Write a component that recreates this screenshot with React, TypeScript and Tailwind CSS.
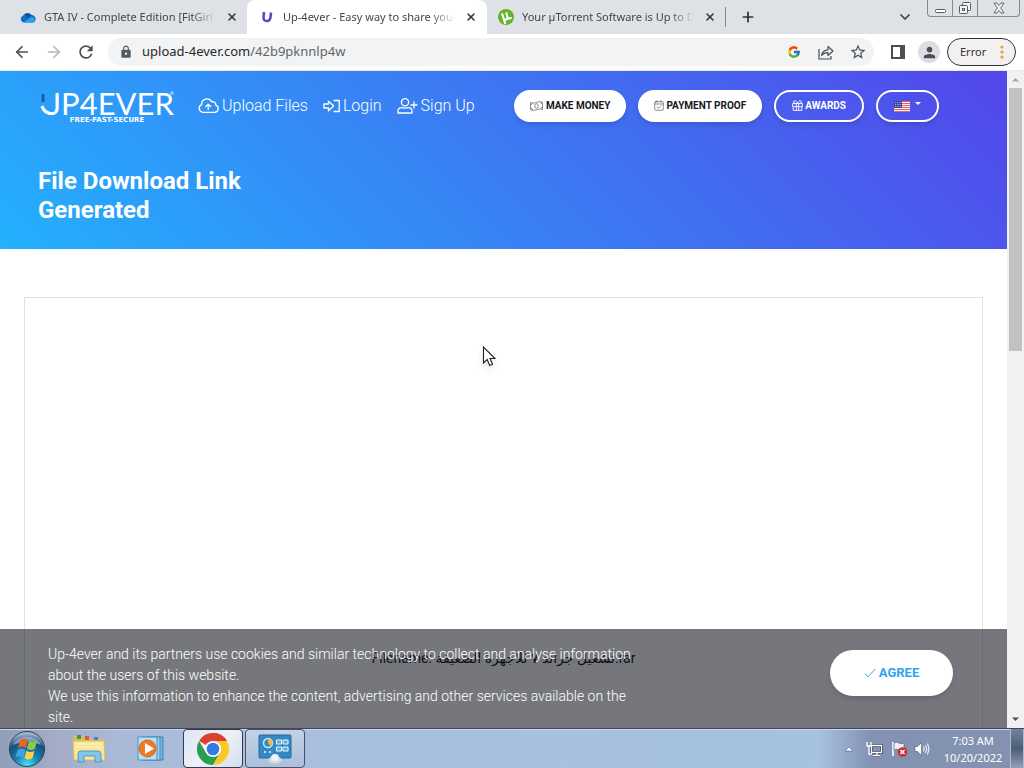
import type { ReactNode } from 'react';
import { ArrowLeft, ArrowRight, ChevronDown, Plus, X } from 'lucide-react';
import { FcGoogle } from 'react-icons/fc';
import { MdLock, MdRefresh, MdStarBorder, MdPerson } from 'react-icons/md';

const uiFont = "font-['Noto_Sans','Open_Sans',sans-serif]";
const pageFont = "font-['Roboto','DejaVu_Sans',sans-serif]";

function CloudIcon() {
  return (
    <svg viewBox="0 0 21 16" className="h-4 w-[21px]" fill="none" stroke="currentColor" strokeWidth="1.3" strokeLinecap="round" strokeLinejoin="round" aria-hidden="true">
      <path d="M5 14.300h11.500a3.700 3.700 0 0 0 1.200-7.200 3 3 0 0 0-4-3.300A5.300 5.300 0 0 0 3.700 6.600 4 4 0 0 0 5 14.300z" />
      <path d="M10.200 11.500V6.300M7.700 8.500l2.500-2.400 2.500 2.400" />
    </svg>
  );
}

function SignInIcon() {
  return (
    <svg viewBox="0 0 17 16" className="h-4 w-[17px]" fill="none" stroke="currentColor" strokeWidth="1.3" strokeLinejoin="round" aria-hidden="true">
      <path d="M.9 6h4.600V3.200L10.700 8l-5.200 4.800V10H.9z" />
      <path d="M11 2.500h5.200v11H11" strokeLinecap="round" />
    </svg>
  );
}

function UserPlusIcon() {
  return (
    <svg viewBox="0 0 21 16" className="h-4 w-[21px]" fill="none" stroke="currentColor" strokeWidth="1.3" strokeLinecap="round" strokeLinejoin="round" aria-hidden="true">
      <circle cx="8" cy="4.300" r="3.600" />
      <path d="M1 15v-1.800C1 11 2.700 9.600 4.700 9.600c1 0 1.500.5 3.300.5s2.300-.5 3.300-.5c2 0 3.700 1.400 3.700 3.600V15z" />
      <path d="M14 7h6M17 4v6" />
    </svg>
  );
}

function MoneyIcon() {
  return (
    <svg viewBox="0 0 13 10" className="h-[10px] w-[13px] opacity-80" fill="none" stroke="currentColor" strokeWidth=".6" aria-hidden="true">
      <path d="M.5 1.500C3 2.800 5.500 1.600 8 .9c1.500-.4 3-.3 4.500.3v7.400C10 7.400 8 8.300 5.500 9 3.800 9.500 2 9.400.5 8.800z" />
      <ellipse cx="6.500" cy="5" rx="1.800" ry="2.300" />
      <path d="M.5 3.800Q2 3.800 2.500 2M12.500 6.300q-1.500 0-2 1.600M10.500 1q.3 1.700 2 1.900M.5 7q1.600.2 2 2.200" />
    </svg>
  );
}

function CalendarIcon() {
  return (
    <svg viewBox="0 0 10 11" className="h-[11px] w-[10px] opacity-80" fill="none" stroke="currentColor" strokeWidth=".6" strokeLinecap="round" aria-hidden="true">
      <rect x=".7" y="1.700" width="8.600" height="8.600" rx="1" />
      <path d="M.7 4h8.600M3 .5v1.600M7 .5v1.600M3.200 7l1.300 1.300 2.500-2.500" />
    </svg>
  );
}

function GiftIcon() {
  return (
    <svg viewBox="0 0 11 11" className="size-[11px]" fill="none" stroke="currentColor" strokeWidth=".9" strokeLinejoin="round" aria-hidden="true">
      <path d="M.6 3.600h9.800v3H.6zM1.200 6.600v3.800h8.600V6.600M4.300 3.600v6.800M6.700 3.600v6.800" />
      <path d="M5.500 3.500C4.700 1.500 3.800.7 2.900.7c-1.900 0-1.700 2.800 0 2.800zM5.500 3.500C6.300 1.500 7.200.7 8.100.7c1.900 0 1.700 2.800 0 2.800z" />
    </svg>
  );
}

function FlagIcon() {
  return (
    <svg viewBox="0 0 16 11" className="mt-[2px] h-[11px] w-4" aria-hidden="true">
      <rect width="16" height="11" fill="#f5f0f5" />
      <path d="M0 .5h16M0 2.500h16M0 4.500h16M0 6.500h16M0 8.500h16M0 10.500h16" stroke="#e0636e" strokeWidth="1" />
      <rect width="8" height="7" fill="#3a4696" />
      <path d="M1 1.500h6M1 3.500h6M1 5.500h6" stroke="#e4e6fa" strokeWidth=".8" strokeDasharray=".8 1" />
    </svg>
  );
}

function Tab({ icon, title, active = false, className }: { icon: ReactNode; title: string; active?: boolean; className: string }) {
  return (
    <div className={`flex h-full min-w-0 items-center ${active ? 'rounded-t-lg bg-white' : ''} ${className}`}>
      <span className="flex w-4 shrink-0 items-center justify-center">{icon}</span>
      <button type="button" className="ml-2 min-w-0 flex-1 overflow-hidden text-left text-[11px] whitespace-nowrap text-[#43464b] [mask-image:linear-gradient(to_right,black_86%,transparent)]">
        {title}
      </button>
      <button type="button" aria-label="Close tab" className="ml-2 flex size-4 shrink-0 items-center justify-center text-[#35383c]">
        <X className="size-3" strokeWidth={3.2} />
      </button>
    </div>
  );
}

function TabStrip() {
  return (
    <div className="flex h-[34px] shrink-0 items-center bg-[#dee1e6]">
      <Tab
        className="w-[247px] pr-[7px] pl-5"
        title="GTA IV - Complete Edition [FitGirl"
        icon={
          <svg viewBox="0 0 16 11" className="h-[11px] w-4" aria-hidden="true">
            <path d="M3.500 10.500a3.500 3.500 0 0 1-.5-6.700A5 5 0 0 1 11.500 3a4 4 0 0 1 2 7.500z" fill="#0f6cc4" />
            <path d="M5 2.200A5 5 0 0 1 12 4L7 6z" fill="#0a55a8" />
            <path d="M3.500 10.500l8-5.800a3.300 3.300 0 0 1 2 5.800z" fill="#2ba3ea" />
          </svg>
        }
      />
      <Tab
        active
        className="w-[240px] pr-2 pl-3"
        title="Up-4ever - Easy way to share your"
        icon={
          <svg viewBox="0 0 12 12" className="size-3" aria-hidden="true">
            <path d="M3 1 2.500 6q-.2 4 3.300 4 3.400 0 3.700-4L10 1.500" fill="none" stroke="#6540c8" strokeWidth="2.600" />
          </svg>
        }
      />
      <Tab
        className="w-[239px] pr-2 pl-[11px]"
        title="Your µTorrent Software is Up to Da"
        icon={
          <svg viewBox="0 0 16 16" className="size-4" aria-hidden="true">
            <circle cx="8" cy="8" r="8" fill="#62b52d" />
            <path d="M4 4.500 5.500 9q.8 2.200 2.800 1.500T9.400 8L8.200 3.500M9.400 8q.7 2 2.800 1.200l1.500-.4M5.500 9l1.800 6" fill="none" stroke="#fff" strokeWidth="2.100" />
          </svg>
        }
      />
      <span className="-ml-px h-5 w-px bg-[#85888d]" />
      <button type="button" aria-label="New tab" className="ml-3 flex size-5 items-center justify-center text-[#2f3236]">
        <Plus className="size-4" strokeWidth={2.6} />
      </button>
      <button type="button" aria-label="Search tabs" className="mr-[14px] ml-auto text-[#3c4043]">
        <ChevronDown className="size-4" strokeWidth={2.6} />
      </button>
      <div className="mr-1 flex h-[17px] self-start rounded-b border border-t-0 border-[#85888e] text-[#55585e]">
        <button type="button" aria-label="Minimize" className="flex w-[25px] items-center justify-center border-r border-[#85888e]">
          <svg viewBox="0 0 13 14" className="h-[14px] w-[13px]" aria-hidden="true">
            <rect x="1.500" y="8.500" width="10" height="3" rx="1" fill="#fff" stroke="currentColor" />
          </svg>
        </button>
        <button type="button" aria-label="Restore" className="flex w-[25px] items-center justify-center border-r border-[#85888e]">
          <svg viewBox="0 0 14 14" className="size-[14px]" fill="#f3f4f6" stroke="currentColor" aria-hidden="true">
            <rect x="4.500" y="1.500" width="8" height="8" rx="1" />
            <rect x="1.500" y="4.500" width="8" height="8" rx="1" />
            <rect x="4.500" y="7.500" width="2" height="2" />
          </svg>
        </button>
        <button type="button" aria-label="Close" className="flex w-[41px] items-center justify-center">
          <svg viewBox="0 0 12 12" className="size-3" fill="#f8f8fa" stroke="currentColor" strokeWidth=".9" strokeLinejoin="round" aria-hidden="true">
            <path d="M1 1h3l2 2.600L8 1h3L7.700 6 11 11H8L6 8.400 4 11H1l3.300-5z" />
          </svg>
        </button>
      </div>
    </div>
  );
}

function Toolbar() {
  return (
    <div className="flex h-[37px] shrink-0 items-center border-b border-[#e4e9f2] bg-white pr-2 pl-3 text-[#4b4e53]">
      <button type="button" aria-label="Back" className="w-8 pl-px"><ArrowLeft className="size-[18px]" strokeWidth={2.3} /></button>
      <button type="button" aria-label="Forward" className="w-8 pl-px text-[#b4b6b9]"><ArrowRight className="size-[18px]" strokeWidth={2.3} /></button>
      <button type="button" aria-label="Reload" className="w-8"><MdRefresh className="size-5" /></button>
      <div className="flex h-7 min-w-0 flex-1 items-center rounded-full bg-[#f1f3f4] pl-[11px]">
        <MdLock className="size-[14px] shrink-0 text-[#55585c]" />
        <div role="textbox" aria-label="Address" className="ml-[9px] min-w-0 flex-1 truncate text-[13px] text-[#5f6368]">
          <span className="text-[#26282b]">upload-4ever.com</span>/42b9pknnlp4w
        </div>
        <button type="button" aria-label="Google" className="flex w-8 justify-center"><FcGoogle className="size-[14px]" /></button>
        <button type="button" aria-label="Share" className="flex w-8 justify-center">
          <svg viewBox="0 0 16 15" className="h-[15px] w-4" fill="none" stroke="currentColor" strokeWidth="1.200" strokeLinejoin="round" aria-hidden="true">
            <path d="M1 4v10h12v-3" />
            <path d="M3.500 10.500C4 7 6.500 5 10 4.800V1.500L15 6l-5 4.500V7.600C7 7.500 5 8.500 3.500 10.500z" />
          </svg>
        </button>
        <button type="button" aria-label="Bookmark" className="flex w-8 justify-center"><MdStarBorder className="size-[18px]" /></button>
      </div>
      <button type="button" aria-label="Side panel" className="ml-4 flex w-4 justify-center">
        <svg viewBox="0 0 14 14" className="size-[14px]" aria-hidden="true">
          <rect x="1" y="1" width="12" height="12" fill="none" stroke="currentColor" strokeWidth="2" />
          <rect x="9" y="1" width="4" height="12" fill="currentColor" />
        </svg>
      </button>
      <button type="button" aria-label="Profile" className="ml-3 flex size-[22px] items-center justify-center rounded-full bg-[#dcdee4]"><MdPerson className="size-[17px]" /></button>
      <button type="button" className="ml-[7px] flex h-7 w-[69px] items-center justify-between rounded-full border border-[#333] bg-[#f2f0f0] pr-[11px] pl-3 text-[11px] text-[#333]">
        Error
        <svg viewBox="0 0 4 14" className="h-[14px] w-1" fill="#dfa52c" aria-hidden="true">
          <circle cx="2" cy="2" r="1.600" /><circle cx="2" cy="7" r="1.600" /><circle cx="2" cy="12" r="1.600" />
        </svg>
      </button>
    </div>
  );
}

function Logo() {
  return (
    <a href="#home" className="relative block w-[136px] font-['Lato',sans-serif] text-white">
      <span className="block pl-[10px] text-[31px] leading-7">JP4EVER</span>
      <span className="block pl-[2px] text-center font-['DejaVu_Sans',sans-serif] text-[7px] leading-[6px] font-bold">FREE-FAST-SECURE</span>
      <svg viewBox="0 0 136 34" className="absolute inset-0 size-full" fill="none" aria-hidden="true">
        <path d="M5 13V5" stroke="#1c5fae" strokeWidth="3" />
        <path d="M4 17q2 7.700 11 7.700" stroke="#fff" strokeWidth="3" />
        <circle cx="134" cy="4" r="1.200" stroke="#fff" strokeWidth=".7" />
      </svg>
    </a>
  );
}

function NavLink({ icon, children }: { icon: ReactNode; children: ReactNode }) {
  return (
    <a href="#nav" className="flex items-center gap-[3px] text-base font-light whitespace-nowrap">
      {icon}
      {children}
    </a>
  );
}

function SiteHeader() {
  return (
    <header className="bg-[linear-gradient(45deg,#23b1fd,#5346ea)] pb-6 text-white">
      <nav className="flex h-[69px] items-center pr-[68px] pl-[38px]">
        <Logo />
        <div className="ml-6 flex items-center gap-[15px]">
          <NavLink icon={<CloudIcon />}>Upload Files</NavLink>
          <NavLink icon={<SignInIcon />}>Login</NavLink>
          <NavLink icon={<UserPlusIcon />}>Sign Up</NavLink>
        </div>
        <div className="ml-auto flex gap-3 text-[10px] font-bold whitespace-nowrap">
          <button type="button" className="flex h-8 items-center gap-[3px] rounded-full bg-white px-4 text-[#16181b] shadow-md"><MoneyIcon />MAKE MONEY</button>
          <button type="button" className="flex h-8 items-center gap-[2px] rounded-full bg-white px-4 text-[#16181b] shadow-md"><CalendarIcon />PAYMENT PROOF</button>
          <button type="button" className="flex h-8 items-center gap-[2px] rounded-full border-2 border-white px-4 shadow-md"><GiftIcon />AWARDS</button>
          <button type="button" aria-label="Language" className="flex h-8 items-center gap-[5px] rounded-full border-2 border-white px-4 shadow-md">
            <FlagIcon />
            <svg viewBox="0 0 6 3" className="mb-1 h-[3px] w-[6px]" fill="currentColor" aria-hidden="true"><path d="M0 0h6L3 3z" /></svg>
          </button>
        </div>
      </nav>
      <h1 className="mt-[27px] ml-[38px] w-60 text-2xl leading-[29px] font-bold">File Download Link Generated</h1>
    </header>
  );
}

function CookieBanner() {
  return (
    <section aria-label="Cookie notice" className="absolute inset-x-0 bottom-0 flex items-start justify-between bg-[#050810]/55 pt-[15px] pr-[54px] pl-12 text-white/90">
      <p className="w-[600px] text-sm leading-[21px] font-light text-white">
        Up-4ever and its partners use cookies and similar technology to collect and analyse information <br />
        about the users of this website.
        <br />
        We use this information to enhance the content, advertising and other services available on the <br />
        site.
      </p>
      <button type="button" className="mt-[6px] flex h-[46px] w-[123px] items-center justify-center gap-[3px] rounded-full bg-white text-[13px] font-bold text-[#2fa4ec] shadow-md">
        <svg viewBox="0 0 12 10" className="h-[10px] w-3" fill="none" stroke="currentColor" strokeWidth="1" aria-hidden="true"><path d="M.7 5.500 4 8.800 11.300 1" /></svg>
        AGREE
      </button>
    </section>
  );
}

function Scrollbar() {
  return (
    <div className="flex w-[17px] shrink-0 flex-col items-center bg-[#f1f1f1]">
      <svg viewBox="0 0 17 17" className="size-[17px] shrink-0" fill="#a3a3a3" aria-hidden="true"><path d="M5 10.500h7L8.500 7z" /></svg>
      <div className="h-2/5 w-[13px] bg-[#c1c1c1]" />
      <svg viewBox="0 0 17 17" className="mt-auto size-[17px] shrink-0" fill="#505050" aria-hidden="true"><path d="M5 6.500h7L8.500 10z" /></svg>
    </div>
  );
}

function Taskbar() {
  return (
    <footer className="flex h-10 shrink-0 items-stretch border-t border-[#41445a] bg-[linear-gradient(to_right,#8f9fb8_0px,#a3abc6_50px,#a9bad8_120px,#a8c0de_300px,#a6c2df_80%,#8392b2_85%,#8292b0)] shadow-[inset_0_1px_0_#cbd6e6]">
      <button type="button" aria-label="Start" className="flex w-[58px] items-center justify-center pr-1">
        <svg viewBox="0 0 38 38" className="size-[38px]" aria-hidden="true">
          <defs>
            <radialGradient id="orb" cx=".5" cy=".95" r=".9">
              <stop offset="0" stopColor="#49e1f2" /><stop offset=".4" stopColor="#177fae" /><stop offset=".75" stopColor="#1a4f7b" /><stop offset="1" stopColor="#a2bace" />
            </radialGradient>
          </defs>
          <circle cx="19" cy="19" r="17.500" fill="url(#orb)" stroke="#263f60" />
          <path d="M5 15a15 13 0 0 1 28 0q-14-7-28 0" fill="#c7d9e5" opacity=".5" />
          <path d="M12 10q4-3 8 0l-2 8q-4-3-8 0z" fill="#e9642c" />
          <path d="M21 11q4 2.500 8-.5l-2 8q-4 3-8 0z" fill="#90c947" />
          <path d="M9.500 20q4-3 8 0l-2 7.500q-4-3-8 0z" fill="#41a2e8" />
          <path d="M18.500 20.500q4 3 8 0l-2 7.500q-4 3-8 0z" fill="#fbd24b" />
        </svg>
      </button>
      <button type="button" aria-label="File explorer" className="flex w-[62px] items-center justify-center">
        <svg viewBox="0 0 34 30" className="h-[30px] w-[34px]" aria-hidden="true">
          <path d="M1 5V3q0-1 1-1h9l2 3h19v21H2z" fill="#ddbd62" />
          <path d="M5 1h4v4H5z" fill="#3e9946" /><path d="M13 2h4v4h-4z" fill="#da5b43" /><path d="M22 3h4v3h-4z" fill="#4a80d4" />
          <path d="M1 7h31l1 19H2z" fill="#f8e79a" stroke="#d8b850" strokeWidth=".8" />
          <path d="M3 10h28M3 13h28" stroke="#fff6c9" />
          <path d="M6 28v-8q0-3 3-3h17q3 0 3 3v8h-6v-6H12v6z" fill="#83c7ec" stroke="#4289bd" strokeWidth=".8" />
        </svg>
      </button>
      <button type="button" aria-label="Media player" className="flex w-[62px] items-center justify-center">
        <svg viewBox="0 0 28 26" className="h-[26px] w-7" aria-hidden="true">
          <path d="M10 1h16v23H10z" fill="#75b6dc" stroke="#3b81af" /><path d="M5 1h18v23H5z" fill="#9acae7" stroke="#4a8fb9" />
          <path d="M1 1h19v23H1z" fill="#b9ddf2" stroke="#4a93bf" />
          <circle cx="10.500" cy="12.500" r="8.500" fill="#ef7b20" stroke="#c65d15" strokeWidth=".7" /><path d="M8 7v11l9-5.500z" fill="#fff" />
        </svg>
      </button>
      <button type="button" aria-label="Chrome" className="mr-[2px] ml-px flex w-[60px] items-center justify-center rounded-sm border border-[#35384e] bg-[linear-gradient(135deg,#dce7f4,#eef1f7_50%,#d4deed)]">
        <svg viewBox="0 0 32 32" className="size-8" aria-hidden="true">
          <path d="M16 16 2.140 8A16 16 0 0 1 29.860 8z" fill="#dd3f32" />
          <path d="M16 0a16 16 0 0 1 13.860 8H16z" fill="#dd3f32" />
          <path d="M2.140 8A16 16 0 0 0 16 32l6.900-12L16 16 9.100 20z" fill="#2c9d51" />
          <path d="M29.860 8A16 16 0 0 1 16 32l6.900-12A8 8 0 0 0 16 8z" fill="#fac928" />
          <circle cx="16" cy="16" r="8" fill="#fff" /><circle cx="16" cy="16" r="6.300" fill="#3679e5" />
        </svg>
      </button>
      <button type="button" aria-label="Control panel" className="flex w-[60px] items-center justify-center rounded-sm border border-[#4a5069] bg-[linear-gradient(#c2d2e6,#adbfdb)]">
        <svg viewBox="0 0 34 30" className="h-[30px] w-[34px]" aria-hidden="true">
          <rect x="1" y="1" width="32" height="23" rx="1" fill="#3289c6" stroke="#2766a0" />
          <circle cx="10" cy="9" r="4.500" fill="#3289c6" stroke="#cfe6f4" strokeWidth="1.500" /><path d="M10 9V4.500A4.500 4.500 0 0 1 13 12.500z" fill="#efb95a" />
          <path d="M18.500 6h5v4h-5zM25 6h5v4h-5zM18.500 13h5v4h-5zM25 13h5v4h-5z" fill="#58a8d9" stroke="#eff7fc" />
          <path d="M7 17v2M12 17v2" stroke="#eff7fc" strokeWidth="1.500" />
          <ellipse cx="17" cy="26" rx="7" ry="3.500" fill="#d3dce4" /><ellipse cx="17" cy="23.500" rx="4" ry="3.500" fill="#eef2f5" />
        </svg>
      </button>
      <div className="ml-auto flex items-center text-white">
        <svg viewBox="0 0 10 6" className="h-[6px] w-[10px]" aria-hidden="true"><path d="M1 5h8L5 1z" fill="#fff" stroke="#4e5c78" strokeWidth=".6" /></svg>
        <svg viewBox="0 0 17 16" className="ml-3 h-4 w-[17px]" fill="none" aria-hidden="true">
          <path d="M5.500 4.500h10v7h-10zM7 14.500h7M11 12v2" stroke="#263248" strokeWidth="2.600" />
          <path d="M5.500 4.500h10v7h-10zM7 14.500h7M11 12v2" stroke="#fff" strokeWidth="1.300" />
          <path d="M1 1v4h4V1M3 5v8h3" stroke="#fff" strokeWidth="1.300" />
        </svg>
        <svg viewBox="0 0 17 16" className="ml-2 h-4 w-[17px]" aria-hidden="true">
          <path d="M2 1v14" stroke="#fff" strokeWidth="1.600" /><path d="M3 2q3-1.500 5 0t5 0v7q-3 1.500-5 0T3 9z" fill="#eef2f7" stroke="#44516b" strokeWidth=".6" />
          <circle cx="11.500" cy="11" r="4.800" fill="#cf2f32" /><path d="m9.500 9 4 4m0-4-4 4" stroke="#fff" strokeWidth="1.500" />
        </svg>
        <svg viewBox="0 0 16 16" className="ml-[6px] size-4" aria-hidden="true">
          <path d="M1 5.500h2.500L7.500 1.500v13l-4-4H1z" fill="#fff" stroke="#4b5873" strokeWidth=".6" />
          <path d="M9.500 5.500q1.500 2.500 0 5M11.500 4q2.500 4 0 8M13.500 2.500q3 5.500 0 11" fill="none" stroke="#fff" />
        </svg>
        <time dateTime="2022-10-20T07:03" className="ml-[10px] w-[66px] text-center text-[11px] leading-[17px] whitespace-nowrap">
          7:03 AM<br />10/20/2022
        </time>
        <button type="button" aria-label="Show desktop" className="ml-1 h-full w-[14px] border-x border-[#aebbd0] bg-linear-to-b from-[#75839d] via-[#4b5d76] to-[#93a0b5]" />
      </div>
    </footer>
  );
}

export default function App() {
  return (
    <div className={`flex h-screen flex-col overflow-hidden bg-white ${uiFont}`}>
      <TabStrip />
      <Toolbar />
      <div className="flex min-h-0 flex-1">
        <div className={`relative flex min-w-0 flex-1 flex-col overflow-hidden ${pageFont}`}>
          <SiteHeader />
          <main className="mx-6 mt-12 flex-1 border border-b-0 border-[#dfe3e6] pt-[350px] text-center text-sm text-[#212529]">
            <p className="whitespace-nowrap">
              Filename: <bdi lang="ar">تشغيل جراند ٧ للاجهزة الضعيفة</bdi>.rar
            </p>
          </main>
          <CookieBanner />
          <svg viewBox="0 0 14 22" className="absolute top-[275px] left-[482px] h-[22px] w-[14px] drop-shadow-md" aria-hidden="true">
            <path d="M1.500 1v16l3.700-3.500 2.500 6 2.800-1.200-2.500-5.800h5z" fill="#fff" stroke="#222" strokeWidth="1.100" />
          </svg>
        </div>
        <Scrollbar />
      </div>
      <Taskbar />
    </div>
  );
}
